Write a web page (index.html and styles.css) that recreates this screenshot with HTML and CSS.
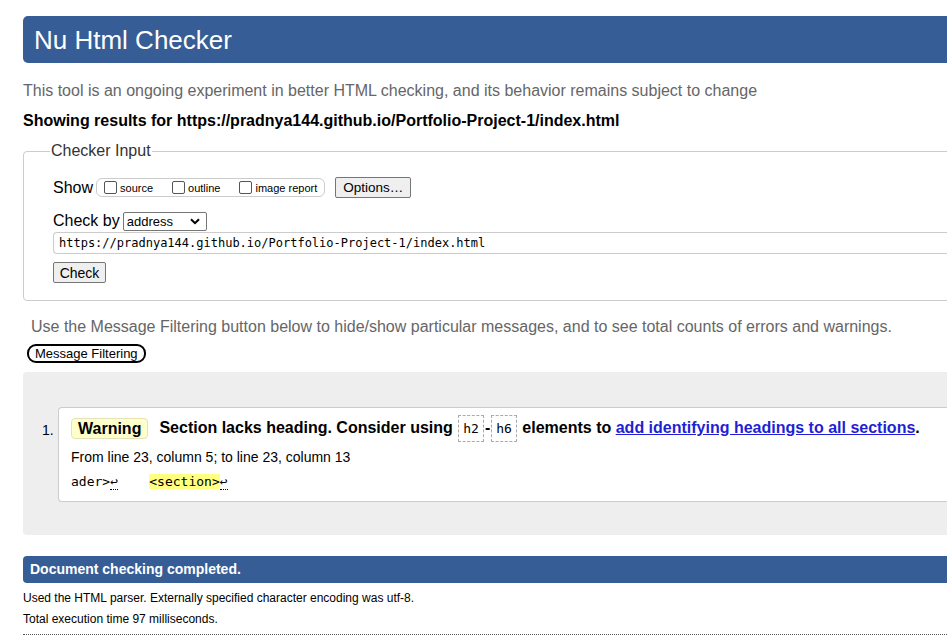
FILE: index.html
```html
<!DOCTYPE html>
<html lang="en">
<head>
<meta charset="utf-8">
<title>Nu Html Checker</title>
<link rel="stylesheet" href="styles.css">
</head>
<body>
<div class="page">
  <h1 class="title">Nu Html Checker</h1>
  <p class="intro">This tool is an ongoing experiment in better HTML checking, and its behavior remains subject to change</p>
  <p class="showing">Showing results for https://pradnya144.github.io/Portfolio-Project-1/index.html</p>

  <fieldset class="checker">
    <legend class="legend">Checker Input</legend>
    <div class="row">
      <span class="label">Show</span>
      <span class="opts">
        <span class="opt"><span class="box"></span>source</span>
        <span class="opt"><span class="box"></span>outline</span>
        <span class="opt"><span class="box"></span>image report</span>
      </span>
      <span class="btn options">Options…</span>
    </div>
    <div class="row by">
      <span class="label">Check by</span>
      <span class="select">address
        <svg class="chev" width="10" height="7" viewBox="0 0 10 7"><path d="M1 1.2 L5 5.2 L9 1.2" fill="none" stroke="#000" stroke-width="2"/></svg>
      </span>
    </div>
    <div class="url">https://pradnya144.github.io/Portfolio-Project-1/index.html</div>
    <div class="row"><span class="btn check">Check</span></div>
  </fieldset>

  <p class="filter-note">Use the Message Filtering button below to hide/show particular messages, and to see total counts of errors and warnings.</p>
  <span class="filter-btn">Message Filtering</span>

  <div class="results">
    <ol class="msgs">
      <li class="msg">
        <p class="msg-head"><span class="badge">Warning</span><span class="msg-text">Section lacks heading. Consider using <code class="tag">h2</code>-<code class="tag">h6</code> elements to <a href="#" class="link">add identifying headings to all sections</a>.</span></p>
        <p class="loc">From line 23, column 5; to line 23, column 13</p>
        <p class="extract">ader&gt;<span class="lf">↩</span>    <mark class="hl">&lt;section&gt;</mark><span class="lf">↩</span></p>
      </li>
    </ol>
  </div>

  <div class="done">Document checking completed.</div>
  <p class="details first">Used the HTML parser. Externally specified character encoding was utf-8.</p>
  <p class="details">Total execution time 97 milliseconds.</p>
  <div class="rule"></div>
</div>
</body>
</html>
```

FILE: styles.css
```css
html, body {
  margin: 0;
  padding: 0;
  overflow: hidden;
  background: #fff;
}

body {
  font-family: "Liberation Sans", Arial, sans-serif;
  color: #000;
}

.page {
  width: 1040px;
  padding: 16px 0 0 23px;
}

.title {
  margin: 0;
  height: 47px;
  box-sizing: border-box;
  padding: 9px 0 0 11px;
  background: #365d95;
  color: #fff;
  font-size: 26px;
  font-weight: normal;
  line-height: 30px;
  border-radius: 5px 0 0 5px;
}

.intro {
  margin: 18px 0 0;
  font-size: 16px;
  line-height: 20px;
  color: #666;
}

.showing {
  margin: 10px 0 0;
  font-size: 16px;
  line-height: 20px;
  font-weight: bold;
}

.checker {
  margin: 11px 0 0;
  border: 1px solid #ccc;
  border-radius: 4px;
  padding: 17px 0 17px 29px;
  display: flex;
  flex-direction: column;
  min-width: 0;
}

.legend {
  font-size: 16px;
  line-height: 18px;
  color: #333;
  padding: 0 1px;
  margin-left: -3px;
}

.row {
  display: flex;
  align-items: center;
  font-size: 16px;
}

.label {
  line-height: 20px;
}

.opts {
  display: inline-flex;
  align-items: center;
  margin-left: 3px;
  height: 19px;
  box-sizing: border-box;
  border: 1px solid #ccc;
  border-radius: 6px;
  padding: 0 7px 0 7px;
  font-size: 11px;
  color: #000;
}

.opt {
  display: inline-flex;
  align-items: center;
  margin-right: 19px;
}

.opt:last-child {
  margin-right: 0;
}

.box {
  display: inline-block;
  width: 11px;
  height: 11px;
  border: 1px solid #555;
  border-radius: 2px;
  margin-right: 3px;
  background: #fff;
}

.btn {
  display: inline-flex;
  align-items: center;
  box-sizing: border-box;
  height: 21px;
  padding: 0 6px;
  border: 1px solid #767676;
  border-radius: 2px;
  background: #efefef;
  font-size: 13px;
}

.options {
  margin-left: 10px;
  width: 76px;
  justify-content: center;
  font-size: 13.5px;
}

.by {
  margin-top: 13px;
}

.select {
  display: inline-flex;
  align-items: center;
  justify-content: space-between;
  box-sizing: border-box;
  width: 84px;
  height: 19px;
  margin-left: 3px;
  padding: 0 6px 0 3px;
  border: 1px solid #767676;
  border-radius: 2px;
  font-size: 13px;
}

.url {
  margin-top: 1px;
  margin-right: 0;
  height: 22px;
  box-sizing: border-box;
  border: 1px solid #ccc;
  border-right: 0;
  border-radius: 4px 0 0 4px;
  padding: 0 5px;
  font-family: "DejaVu Sans Mono", "Liberation Mono", monospace;
  font-size: 12px;
  line-height: 20px;
}

.check {
  margin-top: 8px;
  width: 53px;
  justify-content: center;
  height: 21px;
  font-size: 14px;
}

.filter-note {
  margin: 16px 0 0 8px;
  font-size: 16px;
  line-height: 20px;
  color: #666;
}

.filter-btn {
  display: inline-block;
  margin: 7px 0 0 4px;
  box-sizing: border-box;
  height: 19px;
  padding: 0 6px;
  border: 2px solid #000;
  border-radius: 9px;
  font-size: 13px;
  line-height: 15px;
}

.results {
  margin-top: 9px;
  background: #eee;
  border-radius: 4px 0 0 4px;
  padding: 35px 0 33px 35px;
}

.msgs {
  margin: 0;
  padding: 0;
  list-style: none;
  counter-reset: m;
}

.msg {
  position: relative;
  background: #fff;
  border: 1px solid #ccc;
  border-right: 0;
  border-radius: 4px 0 0 4px;
  padding: 6px 0 11px 12px;
  counter-increment: m;
}

.msg::before {
  content: counter(m) ".";
  position: absolute;
  left: -17px;
  top: 14px;
  font-size: 14px;
  color: #000;
}

.msg-head {
  margin: 0;
  font-size: 16px;
  font-weight: bold;
  line-height: 27px;
  display: flex;
  align-items: center;
}

.badge {
  display: inline-block;
  box-sizing: border-box;
  height: 21px;
  padding: 0 6px;
  background: #ffffcc;
  border: 1px solid #e6e2b8;
  border-radius: 4px;
  line-height: 19px;
  margin-right: 11px;
}

.tag {
  display: inline-block;
  box-sizing: border-box;
  height: 27px;
  margin: 0 1px;
  padding: 0 4px;
  border: 1px dashed #aaa;
  font-family: "DejaVu Sans Mono", "Liberation Mono", monospace;
  font-size: 13px;
  font-weight: normal;
  line-height: 25px;
  vertical-align: middle;
}

.link {
  color: #1f1fd6;
  text-decoration: underline;
}

.loc {
  margin: 7px 0 0;
  font-size: 14px;
  line-height: 17px;
}

.extract {
  margin: 7px 0 0;
  font-family: "DejaVu Sans Mono", "Liberation Mono", monospace;
  font-size: 13px;
  line-height: 17px;
  white-space: pre;
}

.lf {
  border-bottom: 1px dotted #000;
}

.hl {
  background: #ffff80;
  color: #000;
}

.done {
  margin-top: 21px;
  height: 27px;
  box-sizing: border-box;
  padding: 0 0 0 7px;
  background: #365d95;
  color: #fff;
  font-size: 14px;
  font-weight: bold;
  line-height: 27px;
  border-radius: 4px 0 0 4px;
}

.details {
  margin: 7px 0 0;
  font-size: 12px;
  line-height: 14px;
}

.details.first {
  margin-top: 8px;
}

.rule {
  margin-top: 8px;
  border-top: 1px dotted #555;
}
```
